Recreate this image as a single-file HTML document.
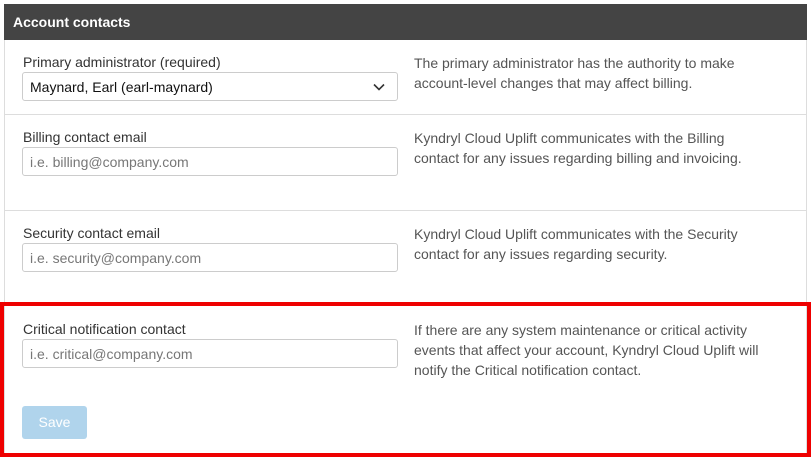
<!DOCTYPE html>
<html><head><style>
body{margin:0;width:811px;height:457px;background:#fff;font-family:"Liberation Sans",sans-serif;position:relative;overflow:hidden}
.hdr{position:absolute;left:4px;top:4px;width:803px;height:36px;background:#444;color:#fff;font-weight:bold;font-size:14px;line-height:36px;padding-left:9px;box-sizing:border-box}
.frame{position:absolute;left:4px;top:40px;width:803px;height:417px;border-left:1px solid #ddd;border-right:1px solid #ddd;box-sizing:border-box}
.hr{position:absolute;left:5px;width:801px;height:1px;background:#ddd}
.lbl{position:absolute;left:23px;font-size:14px;color:#333}
.inp{position:absolute;left:22px;width:376px;height:29px;border:1px solid #ccc;border-radius:3px;box-sizing:border-box;font-size:14px;color:#777;padding-left:7px;line-height:28px}
.desc{position:absolute;left:414px;font-size:14px;color:#555;line-height:20px;white-space:nowrap}
.red{position:absolute;left:0;top:302px;width:811px;height:155px;border:4px solid #e00;box-sizing:border-box}
.btn{position:absolute;left:22px;top:406px;width:65px;height:33px;background:#b0d4ec;border-radius:3px;color:#fff;font-size:14px;text-align:center;line-height:33px}
</style></head><body>
<div class="hdr">Account contacts</div>
<div class="frame"></div>
<div class="hr" style="top:114px"></div>
<div class="hr" style="top:210px"></div>
<div class="lbl" style="top:54px">Primary administrator (required)</div>
<div class="inp" style="top:72px;color:#111">Maynard, Earl (earl-maynard)
<svg style="position:absolute;right:12px;top:10px" width="12" height="8" viewBox="0 0 12 8"><path d="M1 1.5L6 6.5L11 1.5" fill="none" stroke="#333" stroke-width="1.6"/></svg></div>
<div class="desc" style="top:53px">The primary administrator has the authority to make<br>account-level changes that may affect billing.</div>
<div class="lbl" style="top:129px">Billing contact email</div>
<div class="inp" style="top:147px">i.e. billing@company.com</div>
<div class="desc" style="top:128px">Kyndryl Cloud Uplift communicates with the Billing<br>contact for any issues regarding billing and invoicing.</div>
<div class="lbl" style="top:225px">Security contact email</div>
<div class="inp" style="top:243px">i.e. security@company.com</div>
<div class="desc" style="top:224px">Kyndryl Cloud Uplift communicates with the Security<br>contact for any issues regarding security.</div>
<div class="red"></div>
<div class="lbl" style="top:321px">Critical notification contact</div>
<div class="inp" style="top:339px">i.e. critical@company.com</div>
<div class="desc" style="top:320px">If there are any system maintenance or critical activity<br>events that affect your account, Kyndryl Cloud Uplift will<br>notify the Critical notification contact.</div>
<div class="btn">Save</div>
</body></html>
